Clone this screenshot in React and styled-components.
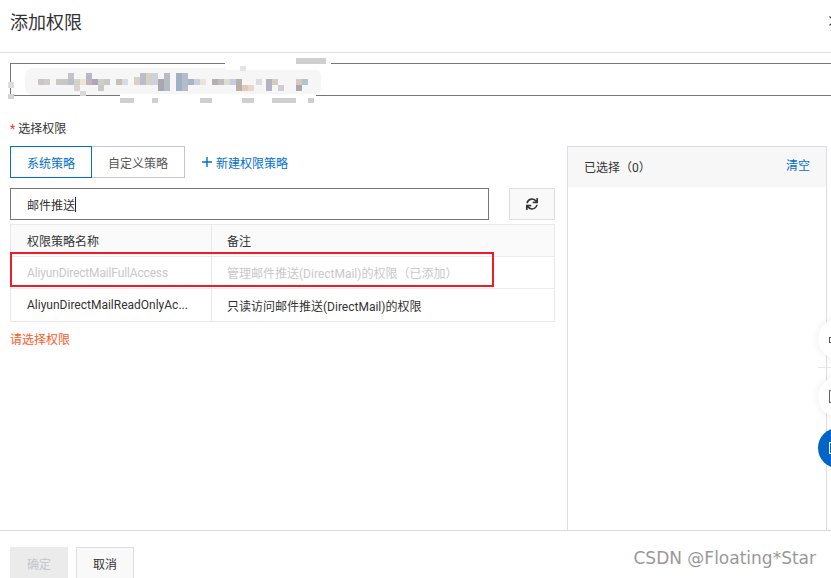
import React from 'react';
import styled, { createGlobalStyle } from 'styled-components';
import { FaSync } from 'react-icons/fa';

const GlobalStyle = createGlobalStyle`
  html, body { margin: 0; padding: 0; background: #fff; }
  body { font-family: Roboto, "Noto Sans CJK SC", sans-serif; font-size: 12px; color: #333; }
`;

const Page = styled.div`
  position: relative;
  width: 831px;
  height: 578px;
  overflow: hidden;
  display: flex;
  flex-direction: column;
`;

const Header = styled.div`
  box-sizing: border-box;
  flex: none;
  height: 53px;
  display: flex;
  align-items: center;
  justify-content: space-between;
  padding: 0 0 10px 10px;
  border-bottom: 1px solid #e3e3e3;
`;

const Title = styled.h2`
  margin: 0;
  font-size: 18px;
  font-weight: 400;
  color: #333;
`;

const CloseIcon = styled.svg`
  flex: none;
  margin-right: -8px;
`;

const Body = styled.div`
  flex: 1;
  display: flex;
  min-height: 0;
`;

const Main = styled.div`
  width: 545px;
  flex: none;
  margin-left: 10px;
  display: flex;
  flex-direction: column;
`;

const AccountWrap = styled.div`
  position: relative;
  width: 840px;
  height: 33px;
  margin-top: 10px;
  box-sizing: border-box;
  border: 1px solid #777;
  flex: none;
`;

const Mosaic = styled.svg`
  position: absolute;
  left: -11px;
  top: -9px;
`;

const FieldLabel = styled.div`
  margin-top: 25px;
  height: 17px;
  line-height: 17px;
  color: #333;
`;

const Star = styled.span`
  color: #e33;
  margin-right: 3px;
`;

const TabRow = styled.div`
  display: flex;
  align-items: center;
  margin-top: 8px;
  height: 32px;
`;

const Tab = styled.div`
  box-sizing: border-box;
  height: 32px;
  width: ${p => (p.$active ? 82 : 94)}px;
  margin-left: ${p => (p.$active ? 0 : -1)}px;
  display: flex;
  align-items: center;
  justify-content: center;
  border: 1px solid ${p => (p.$active ? '#0070cc' : '#c4c6cf')};
  color: ${p => (p.$active ? '#0070cc' : '#555')};
  position: relative;
  z-index: ${p => (p.$active ? 1 : 0)};
`;

const NewLink = styled.a`
  display: flex;
  align-items: center;
  gap: 3px;
  margin-left: 16px;
  color: #0070cc;
`;

const SearchRow = styled.div`
  display: flex;
  justify-content: space-between;
  margin-top: 10px;
  height: 32px;
`;

const SearchBox = styled.div`
  box-sizing: border-box;
  width: 479px;
  height: 32px;
  border: 1px solid #777;
  display: flex;
  align-items: center;
  padding-left: 16px;
  color: #333;
`;

const Caret = styled.span`
  width: 1px;
  height: 15px;
  background: #222;
`;

const RefreshButton = styled.div`
  box-sizing: border-box;
  width: 46px;
  height: 32px;
  border: 1px solid #dcdee3;
  background: #f9f9f9;
  display: flex;
  align-items: center;
  justify-content: center;
  color: #333;
`;

const Table = styled.div`
  margin-top: 4px;
  border: 1px solid #e9e9e9;
  border-bottom: 0;
`;

const Row = styled.div`
  display: grid;
  grid-template-columns: 200px 1fr;
  height: ${p => p.$h || 32}px;
  box-sizing: border-box;
  border-bottom: 1px solid #e9e9e9;
  background: ${p => (p.$head ? '#fafafa' : '#fff')};
  color: ${p => (p.$muted ? '#c8c8c8' : '#333')};
`;

const Cell = styled.div`
  padding-left: 16px;
  display: flex;
  align-items: center;
  white-space: nowrap;
  letter-spacing: ${p => (p.$tight ? '-0.15px' : 'normal')};
  & + & { border-left: 1px solid #e9e9e9; padding-left: 15px; }
`;

const ErrorText = styled.div`
  margin-top: 10px;
  color: #ff5a1f;
  line-height: 17px;
`;

const Highlight = styled.div`
  position: absolute;
  left: 10px;
  top: 252px;
  width: 484px;
  height: 35px;
  box-sizing: border-box;
  border: 2px solid #ee1c25;
  pointer-events: none;
`;

const Side = styled.div`
  width: 260px;
  flex: none;
  margin-left: 12px;
  margin-top: 93px;
  box-sizing: border-box;
  border: 1px solid #dcdee3;
  border-bottom: 0;
`;

const SideHead = styled.div`
  height: 40px;
  background: #f7f7f7;
  display: flex;
  justify-content: space-between;
  padding: 0 16px;
  color: #333;
`;

const SideCount = styled.span`
  line-height: 42px;
`;

const ClearLink = styled.a`
  color: #0070cc;
  line-height: 38px;
`;

const Footer = styled.div`
  flex: none;
  box-sizing: border-box;
  height: 48px;
  border-top: 1px solid #dcdcdc;
  display: flex;
  gap: 8px;
  padding: 16px 0 0 10px;
`;

const FootButton = styled.div`
  box-sizing: border-box;
  width: 58px;
  height: 32px;
  flex: none;
  display: flex;
  align-items: center;
  justify-content: center;
  background: ${p => (p.$disabled ? '#ebebeb' : '#f9f9f9')};
  border: 1px solid ${p => (p.$disabled ? '#ebebeb' : '#dcdee3')};
  color: ${p => (p.$disabled ? '#c4c6cf' : '#333')};
`;

const Watermark = styled.div`
  position: absolute;
  right: 15px;
  bottom: 10px;
  font-family: "DejaVu Sans", sans-serif;
  font-size: 17px;
  color: #999;
  line-height: 20px;
`;

const Float = styled.div`
  position: absolute;
  left: 818px;
  top: ${p => p.$top}px;
  width: 40px;
  height: 40px;
  border-radius: 50%;
  background: ${p => (p.$blue ? '#0064c8' : '#fff')};
  box-shadow: ${p => (p.$blue ? 'none' : '0 0 8px rgba(0,0,0,0.08)')};
`;

const FloatGlyph = styled.span`
  position: absolute;
  left: ${p => p.$left}px;
  top: ${p => p.$top}px;
  width: 5px;
  height: ${p => p.$h}px;
  box-sizing: border-box;
  border: 1px solid ${p => p.$color};
  border-right: 0;
`;

const FloatRule = styled.div`
  position: absolute;
  left: 818px;
  top: 367px;
  width: 13px;
  height: 1px;
  background: #e6e6e6;
`;

// pixelated smear over the account name: [x, y, w, h, colour]
const blocks = [
  [8, 80, 6, 6, '#dcdcdc'], [8, 92, 6, 5, '#d4d4d4'],
  [38, 77, 6, 6, '#c9c6c2'], [44, 77, 6, 6, '#cfccc8'], [56, 77, 6, 6, '#cbc8c0'], [62, 77, 6, 6, '#c6c8c4'],
  [68, 77, 6, 6, '#b9bfc8'], [74, 77, 6, 6, '#d0d2cc'], [80, 77, 6, 6, '#ece4d4'], [86, 77, 6, 6, '#bfb5ba'],
  [92, 77, 6, 6, '#b0a5b0'], [98, 77, 6, 6, '#cdd0c4'], [104, 77, 6, 6, '#c8c8c8'], [116, 77, 6, 6, '#c6c0b8'],
  [122, 77, 6, 6, '#d5dce4'], [134, 75, 6, 8, '#d6d0c8'], [140, 71, 6, 12, '#bcbcc6'], [146, 71, 6, 12, '#d6d0c6'],
  [152, 71, 6, 12, '#cfd2dc'], [158, 77, 6, 12, '#a8a8b0'], [164, 71, 6, 18, '#b4bcc8'], [176, 71, 6, 18, '#9fb0c4'],
  [182, 71, 6, 18, '#b2bccb'], [188, 77, 6, 6, '#a8b4c4'], [194, 77, 6, 6, '#c8d0dc'], [200, 77, 6, 6, '#e8e4d8'],
  [212, 77, 6, 6, '#b4aeb0'], [218, 77, 6, 6, '#c0bcbc'], [224, 77, 6, 6, '#dcdcd4'], [230, 77, 6, 6, '#c4cee0'],
  [236, 77, 6, 12, '#b8b0a8'], [242, 83, 6, 6, '#dcccc0'], [248, 83, 6, 6, '#e8d8c8'], [256, 77, 6, 6, '#dcdcdc'],
  [266, 77, 6, 12, '#b0b4c0'], [272, 77, 6, 6, '#d8ccc0'], [278, 83, 6, 6, '#d0ccd0'],
  [296, 77, 6, 6, '#d8c8b8'], [302, 77, 6, 6, '#b0c4d8'], [296, 83, 6, 6, '#a8a8b0'],
  [68, 71, 6, 6, '#c4c4c8'], [86, 71, 6, 6, '#b8b8c0'], [74, 83, 6, 6, '#d8d4d4'], [98, 83, 6, 6, '#c8c8c8'],
  [80, 89, 6, 5, '#d8d8d8'],
  [296, 56, 30, 6, '#cfcfcf'], [240, 64, 6, 5, '#e4e4e4'],
  [120, 96, 14, 5, '#cfcfcf'], [152, 96, 6, 5, '#cfcfcf'], [200, 96, 12, 5, '#cfcfcf'],
  [242, 96, 12, 5, '#cfcfcf'], [272, 96, 24, 5, '#cfcfcf'], [308, 96, 6, 5, '#cfcfcf'],
];

const App = () => {
  return (
    <Page>
      <GlobalStyle />
      <Header>
        <Title>添加权限</Title>
        <CloseIcon width="10" height="10" viewBox="0 0 10 10">
          <path d="M0.5 0.5l9 9M9.5 0.5l-9 9" stroke="#444" strokeWidth="1.2" fill="none" />
        </CloseIcon>
      </Header>
      <Body>
        <Main>
          <AccountWrap>
            <Mosaic width="340" height="52" viewBox="0 53 340 52">
              <rect x="25" y="66" width="296" height="27" rx="8" fill="#f6f6f6" />
              <rect x="225" y="60" width="106" height="8" fill="#fff" />
              <rect x="120" y="92" width="196" height="9" fill="#fff" />
              {blocks.map(([x, y, w, h, c], i) => (
                <rect key={i} x={x} y={y} width={w} height={h} fill={c} />
              ))}
            </Mosaic>
          </AccountWrap>
          <FieldLabel><Star>*</Star>选择权限</FieldLabel>
          <TabRow>
            <Tab $active>系统策略</Tab>
            <Tab>自定义策略</Tab>
            <NewLink>
              <svg width="12" height="12" viewBox="0 0 12 12">
                <path d="M6 1v10M1 6h10" stroke="#0070cc" strokeWidth="1.4" fill="none" />
              </svg>
              新建权限策略
            </NewLink>
          </TabRow>
          <SearchRow>
            <SearchBox>邮件推送<Caret /></SearchBox>
            <RefreshButton><FaSync size={12} /></RefreshButton>
          </SearchRow>
          <Table>
            <Row $head>
              <Cell>权限策略名称</Cell>
              <Cell>备注</Cell>
            </Row>
            <Row $muted>
              <Cell $tight>AliyunDirectMailFullAccess</Cell>
              <Cell>管理邮件推送(DirectMail)的权限（已添加）</Cell>
            </Row>
            <Row $h={33}>
              <Cell>AliyunDirectMailReadOnlyAc...</Cell>
              <Cell>只读访问邮件推送(DirectMail)的权限</Cell>
            </Row>
          </Table>
          <ErrorText>请选择权限</ErrorText>
        </Main>
        <Side>
          <SideHead>
            <SideCount>已选择（0）</SideCount>
            <ClearLink>清空</ClearLink>
          </SideHead>
        </Side>
      </Body>
      <Footer>
        <FootButton $disabled>确定</FootButton>
        <FootButton>取消</FootButton>
      </Footer>
      <Highlight />
      <Float $top={319}><FloatGlyph $left={11} $top={18} $h={6} $color="#555" /></Float>
      <FloatRule />
      <Float $top={377}><FloatGlyph $left={11} $top={13} $h={13} $color="#666" /></Float>
      <Float $top={428} $blue><FloatGlyph $left={11} $top={14} $h={12} $color="#fff" /></Float>
      <Watermark>CSDN @Floating*Star</Watermark>
    </Page>
  );
};

export default App;
